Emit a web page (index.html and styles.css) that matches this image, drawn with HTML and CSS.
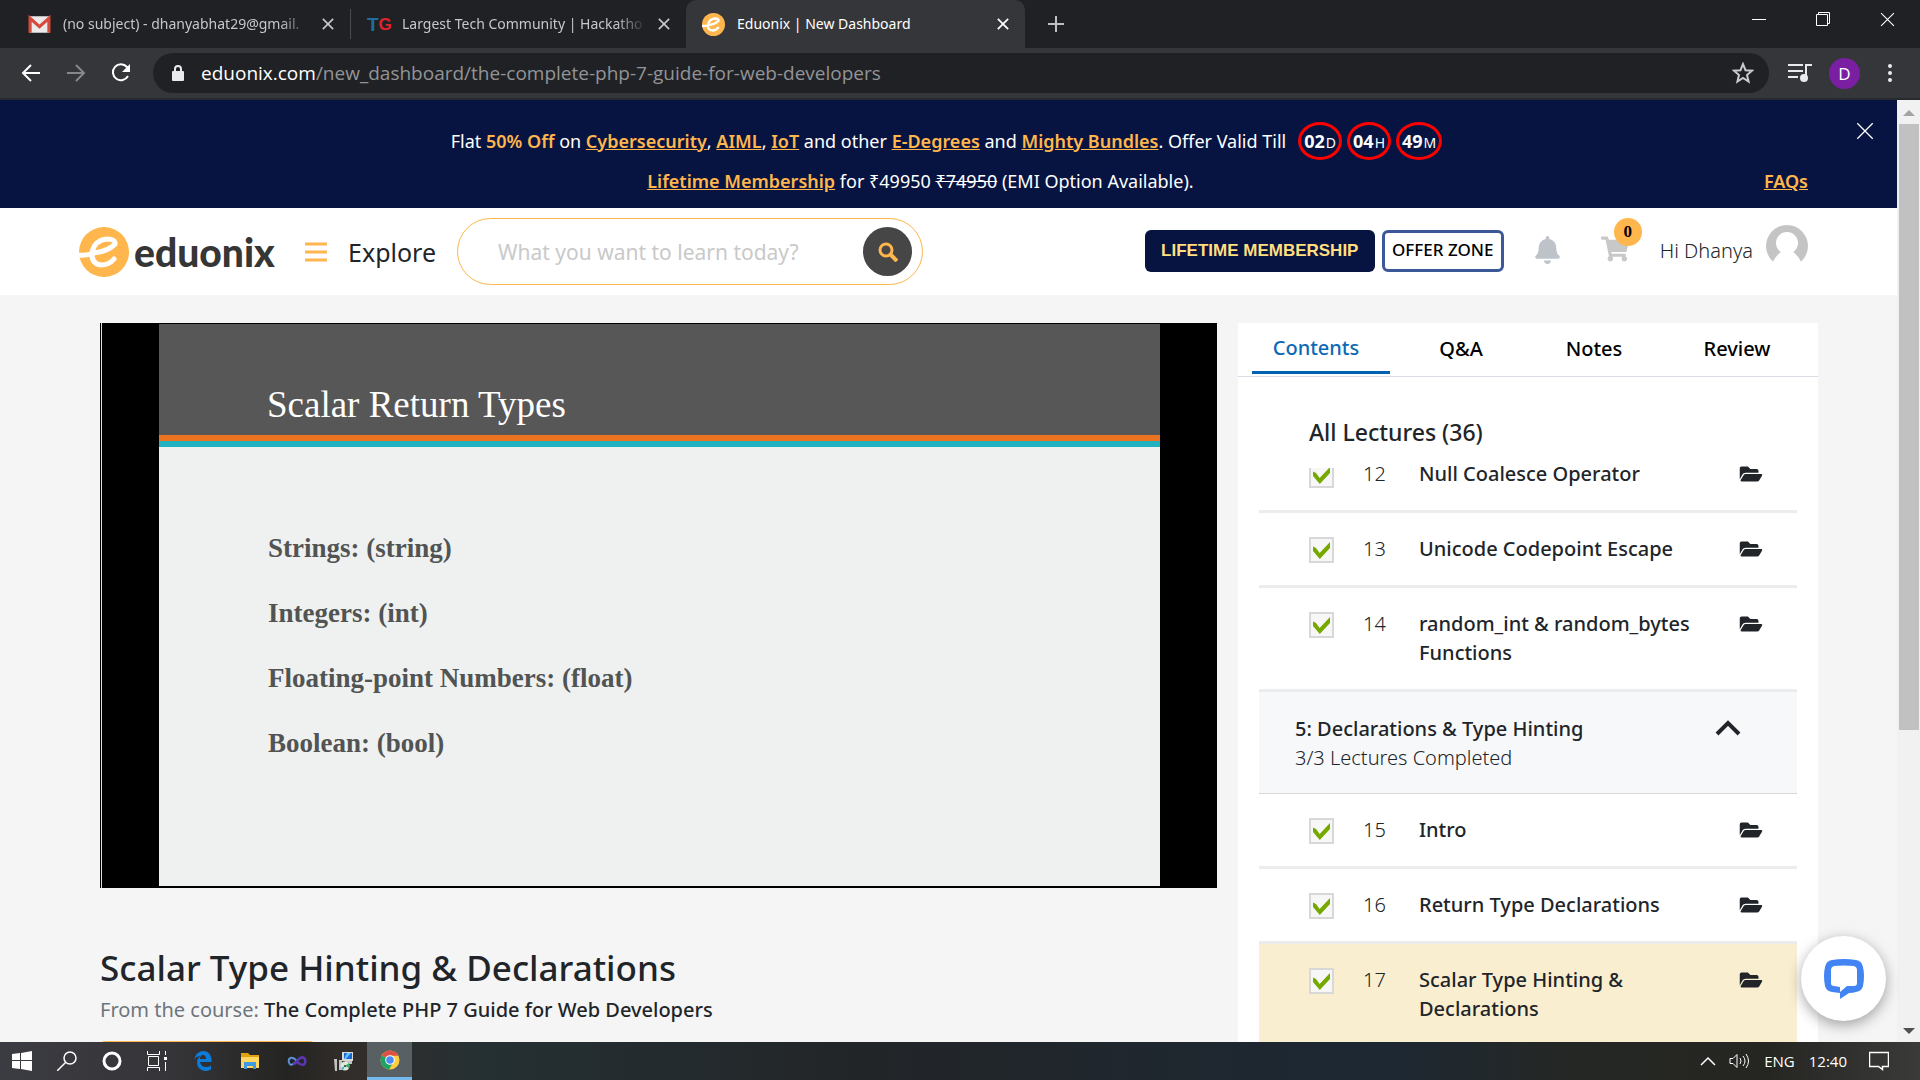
FILE: index.html
```html
<!DOCTYPE html>
<html lang="en">
<head>
<meta charset="utf-8">
<title>Eduonix | New Dashboard</title>
<link rel="stylesheet" href="styles.css">
</head>
<body>
<svg class="defs" aria-hidden="true">
  <symbol id="folder" viewBox="0 0 576 512"><path d="M572.694 292.093L500.27 416.248A63.997 63.997 0 0 1 444.989 448H45.025c-18.523 0-30.064-20.093-20.731-36.093l72.424-124.155A64 64 0 0 1 152 256h399.964c18.523 0 30.064 20.093 20.73 36.093zM152 224h328v-48c0-26.51-21.49-48-48-48H272l-64-64H48C21.49 64 0 85.49 0 112v278.046l69.077-118.418C86.214 242.25 117.989 224 152 224z"/></symbol>
  <symbol id="close" viewBox="0 0 14 14"><path d="M1 1l12 12M13 1L1 13" fill="none" stroke="currentColor"/></symbol>
  <symbol id="emark" viewBox="0 0 50 50"><circle cx="25" cy="25" r="25" fill="#ffb64d"/><path class="emark-line" d="M0 28 Q8 29 15 26 Q30 24 36 17 Q37 12 28 12 Q16 13 13 25 Q12 37 22 38 Q30 38 35 32" fill="none" stroke-width="5" stroke-linecap="round" stroke-linejoin="round"/></symbol>
</svg>

<header class="tabstrip">
  <div class="tab">
    <svg class="tab-icon" viewBox="0 0 22 22"><rect x="1" y="3" width="20" height="16" rx="1" fill="#eceaea"/><path d="M2 19V5l9 8 9-8v14" fill="none" stroke="#d54b3d" stroke-width="3"/></svg>
    <span class="tab-title">(no subject) - dhanyabhat29@gmail.</span>
    <button class="tab-close" aria-label="Close tab"><svg width="12" height="12"><use href="#close"/></svg></button>
  </div>
  <div class="tab tab-second">
    <span class="tab-icon tg"><b>T</b><b>G</b></span>
    <span class="tab-title">Largest Tech Community | Hackatho</span>
    <button class="tab-close" aria-label="Close tab"><svg width="12" height="12"><use href="#close"/></svg></button>
  </div>
  <div class="tab tab-active">
    <svg class="tab-icon"><use href="#emark"/></svg>
    <span class="tab-title">Eduonix | New Dashboard</span>
    <button class="tab-close" aria-label="Close tab"><svg width="12" height="12"><use href="#close"/></svg></button>
  </div>
  <button class="new-tab" aria-label="New tab"><svg width="18" height="18" viewBox="0 0 18 18"><path d="M9 1v16M1 9h16" stroke="#bdc1c6" stroke-width="2"/></svg></button>
  <div class="window-controls">
    <button aria-label="Minimize"><svg width="14" height="14"><path d="M0 7.500h14" stroke="#fff"/></svg></button>
    <button aria-label="Restore"><svg width="14" height="14"><path d="M.5 2.500h11v11H.5zM2.500 2.500v-2h11v11h-2" fill="none" stroke="#fff"/></svg></button>
    <button aria-label="Close"><svg width="15" height="15"><use href="#close"/></svg></button>
  </div>
</header>

<div class="toolbar">
  <div class="nav-buttons">
    <button aria-label="Back"><svg width="20" height="20" viewBox="0 0 20 20"><path d="M19 10H2M10 2l-8 8 8 8" fill="none" stroke="#fff" stroke-width="2"/></svg></button>
    <button aria-label="Forward"><svg width="20" height="20" viewBox="0 0 20 20"><path d="M1 10h17M10 2l8 8-8 8" fill="none" stroke="#85878a" stroke-width="2"/></svg></button>
    <button aria-label="Reload"><svg width="20" height="20" viewBox="0 0 20 20"><path d="M17 13a8 8 0 1 1-1-9l2 2" fill="none" stroke="#fff" stroke-width="2"/><path d="M19 1v8h-8z" fill="#fff"/></svg></button>
  </div>
  <div class="omnibox">
    <svg width="12" height="17" viewBox="0 0 12 17"><rect y="6" width="12" height="10" rx="1" fill="#e8eaed"/><path d="M3 7V4a3 3 0 0 1 6 0v3" fill="none" stroke="#e8eaed" stroke-width="2"/></svg>
    <p class="url"><b>eduonix.com</b>/new_dashboard/the-complete-php-7-guide-for-web-developers</p>
    <svg width="22" height="22" viewBox="0 0 22 22"><path d="M11 2l2.500 6.200 6.500.5-5 4.300 1.600 6.500L11 16l-5.600 3.500L7 13 2 8.700l6.500-.5z" fill="none" stroke="#c8cacd" stroke-width="2"/></svg>
  </div>
  <svg class="music" width="24" height="20" viewBox="0 0 24 20"><path d="M0 2h15M0 8h15M0 14h10M18 16V2h6" fill="none" stroke="#e8eaed" stroke-width="2"/><circle cx="16" cy="15" r="4" fill="#e8eaed"/></svg>
  <span class="profile">D</span>
  <svg class="dots" width="6" height="20"><g fill="#e8eaed"><circle cx="3" cy="3" r="2"/><circle cx="3" cy="10" r="2"/><circle cx="3" cy="17" r="2"/></g></svg>
</div>

<div class="viewport">
  <div class="page">
    <section class="promo">
      <div class="promo-line">
        <p>Flat <em>50% Off</em> on <a href="#">Cybersecurity</a>, <a href="#">AIML</a>, <a href="#">IoT</a> and other <a href="#">E-Degrees</a> and <a href="#">Mighty Bundles</a>. Offer Valid Till</p>
        <div class="countdown"><span><b>02</b>D</span><span><b>04</b>H</span><span><b>49</b>M</span></div>
      </div>
      <div class="promo-line">
        <p class="promo-text"><a href="#">Lifetime Membership</a> for ₹49950 <s>₹74950</s> (EMI Option Available).</p>
        <a href="#">FAQs</a>
      </div>
      <button class="promo-close" aria-label="Dismiss offer"><svg width="18" height="18"><use href="#close"/></svg></button>
    </section>

    <div class="site-header">
      <a class="logo" href="#"><svg width="50" height="50"><use href="#emark"/></svg><span>eduonix</span></a>
      <button class="explore"><svg width="22" height="20"><path d="M0 2h22M0 10h22M0 18h22" stroke="#ffb64d" stroke-width="3"/></svg>Explore</button>
      <form class="search">
        <input type="text" aria-label="Search courses" placeholder="What you want to learn today?">
        <button type="button" aria-label="Search"><svg width="20" height="20" viewBox="0 0 20 20"><circle cx="8" cy="8" r="6" fill="none" stroke="#ffb64d" stroke-width="3"/><path d="M12 12l7 7" stroke="#ffb64d" stroke-width="4"/></svg></button>
      </form>
      <a class="lifetime" href="#">LIFETIME MEMBERSHIP</a>
      <a class="offer" href="#">OFFER ZONE</a>
      <button class="bell" aria-label="Notifications"><svg width="25" height="28" viewBox="0 0 448 512"><path fill="#bdc3c9" d="M224 512c35.320 0 63.970-28.650 63.970-64H160.030c0 35.350 28.650 64 63.970 64zm215.390-149.710c-19.320-20.760-55.470-51.990-55.470-154.290 0-77.700-54.480-139.900-127.940-155.160V32c0-17.670-14.320-32-31.980-32s-31.980 14.330-31.980 32v20.840C118.560 68.100 64.080 130.300 64.080 208c0 102.300-36.150 133.530-55.470 154.290-6 6.450-8.660 14.160-8.610 21.710.11 16.400 12.980 32 32.100 32h383.800c19.120 0 32-15.600 32.100-32 .05-7.550-2.610-15.270-8.610-21.710z"/></svg></button>
      <a class="cart" href="#" aria-label="Cart"><svg width="28" height="26" viewBox="0 0 576 512"><path fill="#c8c8c8" d="M528.120 301.319l47.273-208C578.806 78.301 567.391 64 551.990 64H159.208l-9.166-44.810C147.758 8.021 137.930 0 126.529 0H24C10.745 0 0 10.745 0 24v16c0 13.255 10.745 24 24 24h69.883l70.248 343.435C147.325 417.100 136 435.222 136 456c0 30.928 25.072 56 56 56s56-25.072 56-56c0-15.674-6.447-29.835-16.824-40h209.647C430.447 426.165 424 440.326 424 456c0 30.928 25.072 56 56 56s56-25.072 56-56c0-22.172-12.888-41.332-31.579-50.405l5.517-24.276c3.413-15.018-8.002-29.319-23.403-29.319H218.117l-6.545-32h293.145c11.206 0 20.920-7.754 23.403-18.681z"/></svg><span class="badge">0</span></a>
      <a class="account" href="#"><span>Hi Dhanya</span><svg width="42" height="42" viewBox="0 0 42 42"><circle cx="21" cy="21" r="21" fill="#c4c4c4"/><circle cx="21" cy="18" r="11" fill="#fff"/><path d="M5 42Q8 32 15 27h12Q34 32 37 42z" fill="#fff"/></svg></a>
    </div>

    <main class="content">
      <section class="lesson">
        <div class="video">
          <div class="slide">
            <h2>Scalar Return Types</h2>
            <div class="stripe"></div>
            <ul>
              <li>Strings: (string)</li>
              <li>Integers: (int)</li>
              <li>Floating-point Numbers: (float)</li>
              <li>Boolean: (bool)</li>
            </ul>
          </div>
        </div>
        <h1>Scalar Type Hinting &amp; Declarations</h1>
        <p class="course">From the course: <b>The Complete PHP 7 Guide for Web Developers</b></p>
        <button class="next" aria-label="Next lecture"></button>
      </section>

      <aside class="panel">
        <nav class="panel-tabs">
          <button class="selected">Contents</button><button>Q&amp;A</button><button>Notes</button><button>Review</button>
        </nav>
        <h3>All Lectures (36)</h3>
        <div class="lectures">
          <div class="row row-first"><input type="checkbox" id="l12" checked><span class="num">12</span><label for="l12">Null Coalesce Operator</label><svg class="folder"><use href="#folder"/></svg></div>
          <div class="row"><input type="checkbox" id="l13" checked><span class="num">13</span><label for="l13">Unicode Codepoint Escape</label><svg class="folder"><use href="#folder"/></svg></div>
          <div class="row"><input type="checkbox" id="l14" checked><span class="num">14</span><label for="l14">random_int &amp; random_bytes Functions</label><svg class="folder"><use href="#folder"/></svg></div>
          <button class="section-head">
            <span class="section-text"><b>5: Declarations &amp; Type Hinting</b><span>3/3 Lectures Completed</span></span>
            <svg width="26" height="16" viewBox="0 0 26 16"><path d="M2 14L13 3l11 11" fill="none" stroke="#212529" stroke-width="4"/></svg>
          </button>
          <div class="row"><input type="checkbox" id="l15" checked><span class="num">15</span><label for="l15">Intro</label><svg class="folder"><use href="#folder"/></svg></div>
          <div class="row"><input type="checkbox" id="l16" checked><span class="num">16</span><label for="l16">Return Type Declarations</label><svg class="folder"><use href="#folder"/></svg></div>
          <div class="row row-current"><input type="checkbox" id="l17" checked><span class="num">17</span><label for="l17">Scalar Type Hinting &amp; Declarations</label><svg class="folder"><use href="#folder"/></svg></div>
        </div>
      </aside>
    </main>
  </div>
  <div class="scrollbar"><i class="arrow-up"></i><i class="thumb"></i><i class="arrow-down"></i></div>
  <button class="chat" aria-label="Open chat"><svg width="40" height="40" viewBox="0 0 40 40"><path fill="#4384f5" fill-rule="evenodd" d="M8 1Q20-1 32 1 38 2 39 8 41 17 39 27 38 32 32 33 29 34 25 34L16 40V34L8 33Q2 32 1 27-1 17 1 8 2 2 8 1zM10 7Q7 8 7 11V24Q7 27 10 27L16 28V33L23 27H30Q33 27 33 24V11Q33 8 30 7 20 6 10 7z"/></svg></button>
</div>

<footer class="taskbar">
  <button class="cell start" aria-label="Start"><svg width="20" height="20"><path fill="#fff" d="M0 3l8-1v7H0zM9 2l11-2v9H9zM0 10h8v8l-8-1zM9 10h11v10L9 18z"/></svg></button>
  <button class="cell" aria-label="Search"><svg width="20" height="20"><circle cx="13" cy="7" r="6" fill="none" stroke="#fff" stroke-width="1.500"/><path d="M9 11l-9 9" stroke="#fff" stroke-width="1.500"/></svg></button>
  <button class="cell" aria-label="Cortana"><svg width="20" height="20"><circle cx="10" cy="10" r="8" fill="none" stroke="#fff" stroke-width="3"/></svg></button>
  <button class="cell" aria-label="Task view"><svg width="20" height="20"><path d="M.5 0v3.500h12V0M.5 20v-3.500h12V20M1.500 5.500h10v9h-10zM18.500 0v4M18.500 11v9" fill="none" stroke="#fff"/><path d="M17 6h3v3h-3z" fill="#fff"/></svg></button>
  <button class="cell app" aria-label="Edge"><svg width="18" height="20" viewBox="0 0 18 20"><path fill="#0c7bd9" d="M0 9Q2 0 10 0q8 1 7.500 11H6q1 5 6 5 3 0 5-1.500v4Q14 20 11 20 3 19 3 11q0-4 4-6-5 0-7 4zm6-1h6q0-4-3-4T6 8z"/></svg></button>
  <button class="cell app" aria-label="File Explorer"><svg width="18" height="18"><path d="M0 1h7l2 2h9v6H0z" fill="#e5a00d"/><path d="M0 5h18v11H0z" fill="#ffd761"/><path d="M3 17v-7h12v7h-3v-3H6v3z" fill="#3f9ae5"/></svg></button>
  <button class="cell app" aria-label="Visual Studio"><svg width="20" height="12" viewBox="0 0 20 12"><path d="M10 6Q6 2 3.500 3T2 7.500 6 9 10 6" fill="none" stroke="#5b8fd6" stroke-width="2"/><path d="M6 9Q8 9 11 5T17 3q2 2 1 5t-5 1-3-3" fill="none" stroke="#5b35b5" stroke-width="2.500"/></svg></button>
  <button class="cell app" aria-label="Installer"><svg width="19" height="20"><path d="M8 1h11v9H8z" fill="#d8d8d8"/><path d="M10 2h8v6h-8z" fill="#1767d8"/><path d="M13 2h4l-5 6h-2z" fill="#5fc1f4"/><path d="M0 8h3v12H1zM5 9h3v10H5zM11 10h7v3h-7z" fill="#c2c2c2"/><circle cx="11" cy="15" r="4.500" fill="#dce9dc"/><path d="M11 15l4-3v5z" fill="#3fae68"/><path d="M11 15l-4 2 2 2z" fill="#35b7cb"/><circle cx="11" cy="15" r="1" fill="#333"/></svg></button>
  <button class="cell cell-active" aria-label="Chrome"><svg width="20" height="20" viewBox="0 0 20 20"><circle cx="10" cy="10" r="9.500" fill="#ffce44"/><path d="M10 10L1.800 5.200A9.500 9.500 0 0 0 9 19.500l4.500-7.500z" fill="#1da362"/><path d="M10 10L1.800 5.200A9.500 9.500 0 0 1 18.500 5.700H10z" fill="#dd5144"/><circle cx="10" cy="10" r="4.800" fill="#fff"/><circle cx="10" cy="10" r="3.800" fill="#4c8bf5"/></svg></button>
  <div class="tray">
    <svg width="16" height="10"><path d="M1 9l7-7 7 7" fill="none" stroke="#fff" stroke-width="1.500"/></svg>
    <svg width="22" height="16"><path d="M1 5.500h3l4-4v13l-4-4H1z" fill="none" stroke="#fff"/><path d="M11 5q2 3 0 6M14 3q4 5 0 10M17 1q5 7 0 14" fill="none" stroke="#fff"/></svg>
    <span>ENG</span>
    <time>12:40</time>
    <svg class="notes" width="20" height="20"><path d="M.5 1.500h19v14h-6v3l-4-3h-9z" fill="none" stroke="#fff" stroke-width="1.500"/></svg>
  </div>
</footer>
</body>
</html>
```
FILE: styles.css
```css
* { box-sizing: border-box; }
html, body { height: 100%; }
body {
  margin: 0;
  display: flex;
  flex-direction: column;
  overflow: hidden;
  font: 18px/29px "Noto Sans", "Open Sans", sans-serif;
  color: #212529;
}
h1, h2, h3, p, ul { margin: 0; padding: 0; font-weight: 400; }
button { border: 0; padding: 0; margin: 0; background: none; font: inherit; color: inherit; }
svg { display: block; flex: none; }
a { color: inherit; text-decoration: none; }
.defs { display: none; }
.emark-line { stroke: #fff; }
.toolbar, .taskbar { font-family: "Open Sans", sans-serif; }

/* Browser tabs */
.tabstrip { flex: none; display: flex; align-items: stretch; height: 48px; background: #202124; color: #c4c7cb; font-size: 14px; line-height: 20px; }
.tab { display: flex; align-items: center; width: 339px; padding: 0 16px; gap: 12px; }
.tab:first-child { width: 351px; padding-left: 28px; border-right: 1px solid transparent; border-image: linear-gradient(transparent 10px, #4a4c50 10px, #4a4c50 38px, transparent 38px) 1; }
.tab-second { width: 335px; }
.tab-icon { width: 23px; height: 23px; }
.tab-title { flex: 1; overflow: hidden; white-space: nowrap; mask-image: linear-gradient(to right, #000 88%, transparent); }
.tab-active { background: #35363a; color: #fff; border-radius: 10px 10px 0 0; }
.tab-active .tab-title { mask-image: none; }
.tab-active .emark-line { stroke: #35363a; }
.tab-close svg { stroke-width: 2; }
.tg { display: flex; font: 21px/23px "Liberation Sans Narrow", "Liberation Sans", sans-serif; }
.tg b { width: 12px; color: #1d6e9e; font-size: 19px; }
.tg b + b { color: #e0232e; font-size: 17px; }
.new-tab { width: 62px; display: grid; place-items: center; }
.window-controls { display: flex; gap: 50px; margin-left: auto; padding: 12px 25px 0 0; align-items: flex-start; color: #fff; }

/* Address bar */
.toolbar { flex: none; display: flex; align-items: center; height: 52px; padding: 0 27px 0 21px; background: #35363a; border-bottom: 2px solid #28292c; }
.nav-buttons { display: flex; gap: 25px; margin-right: 22px; }
.omnibox { flex: 1; display: flex; align-items: center; gap: 17px; height: 40px; padding: 0 15px 0 19px; border-radius: 20px; background: #202124; }
.url { flex: 1; color: #929497; font-size: 19px; line-height: 26px; }
.url b { color: #fff; font-weight: 400; }
.music { margin-left: 19px; }
.profile { width: 31px; height: 31px; margin: 0 27px 0 17px; border-radius: 50%; background: #7b1fa2; color: #fff; text-align: center; font-size: 17px; line-height: 31px; }

.viewport { position: relative; flex: 1; min-height: 0; display: flex; overflow: hidden; background: #f5f5f5; }
.page { flex: 1; }
.scrollbar { width: 23px; padding: 0 1px 0 2px; display: flex; flex-direction: column; align-items: center; background: #f1f1f1; }
.arrow-up, .arrow-down { border: 6px solid transparent; }
.arrow-up { border-bottom-color: #a3a3a3; margin: 4px 0 8px; }
.arrow-down { border-top-color: #505050; margin: auto 0 2px; }
.thumb { width: 100%; height: 606px; background: #c1c1c1; }

/* Offer banner */
.promo { position: relative; height: 108px; padding: 21px 89px 0; background: #071442; color: #fff; line-height: 28px; }
.promo-line { display: flex; justify-content: center; align-items: center; gap: 12px; min-height: 40px; }
.promo a, .promo em { color: #ffb64d; font-weight: 600; font-style: normal; }
.promo a { text-decoration: underline; }
.promo-text { flex: 1; text-align: center; }
.countdown { display: flex; gap: 5px; margin-right: 4px; }
.countdown span { padding: 0 3px; border: 3px solid #f00; border-radius: 50%; height: 38px; line-height: 32px; font-size: 14px; }
.countdown b { font-size: 18px; margin-right: 1px; }
.promo-close { position: absolute; top: 22px; right: 23px; }

/* Site header */
.site-header { display: flex; align-items: center; height: 87px; padding: 0 89px 0 79px; background: #fff; }
.logo { display: flex; align-items: center; gap: 5px; width: 226px; color: #363636; font: 900 39px/44px Lato, sans-serif; }
.explore { display: flex; align-items: center; gap: 21px; width: 152px; font-size: 25px; line-height: 32px; }
.search { display: flex; align-items: center; width: 466px; height: 67px; padding: 0 10px 0 40px; border: 1px solid #ffb64d; border-radius: 34px; }
.search input { flex: 1; min-width: 0; border: 0; outline: 0; padding: 0; background: none; font: 21px/30px "Noto Sans", sans-serif; }
.search input::placeholder { color: #c9c9c9; }
.search button { display: grid; place-items: center; width: 49px; height: 49px; border-radius: 50%; background: #464646; }
.lifetime { margin: 0 7px 2px auto; width: 230px; height: 42px; border-radius: 6px; background: #071442; color: #ffdf80; text-align: center; font: bold 17px/42px "Liberation Sans", sans-serif; }
.offer { margin-bottom: 2px; width: 122px; height: 42px; border: 3px solid #3b5998; border-radius: 6px; color: #000; text-align: center; font-size: 17px; line-height: 34px; font-weight: 500; white-space: nowrap; }
.bell { margin: 0 41px 4px 31px; }
.cart { position: relative; margin-bottom: 6px; }
.badge { position: absolute; left: 13px; top: -18px; width: 28px; height: 28px; border-radius: 50%; background: #ffb64d; color: #000; text-align: center; font: bold 17px/28px "Liberation Serif", serif; }
.account { display: flex; align-items: center; gap: 13px; margin: 0 0 12px 31px; font-size: 20px; font-weight: 300; }
.account span { padding-top: 9px; }

/* Lesson */
.content { display: grid; grid-template-columns: 1117fr 580fr; gap: 21px; padding: 28px 79px 0 100px; }
.video { aspect-ratio: 1117 / 565; padding: 1px 57px 2px 59px; background: #000; box-shadow: inset 1px 0 #000, inset 2px 0 #ddd; }
.slide { height: 100%; background: #eff1f0; }
.slide h2 { height: 111px; padding: 59px 0 0 108px; background: #575757; color: #fff; font: 37px/44px "Liberation Serif", serif; }
.stripe { height: 12px; background: linear-gradient(#ec7420 50%, #22b1bf 50%); }
.slide ul { padding: 69px 0 0 109px; list-style: none; color: #525454; font: bold 27px/65px "Liberation Serif", serif; }
.lesson h1 { margin-top: 56px; font-size: 35px; line-height: 48px; font-weight: 500; }
.course { margin-top: 4px; color: #6c757d; font-size: 20px; line-height: 28px; }
.course b { color: #212529; font-weight: 500; }
.next { display: block; width: 215px; height: 48px; margin-top: 17px; border-radius: 5px; background: #ffb64d; }

/* Lecture list */
.panel { background: #fff; }
.panel-tabs { display: grid; grid-template-columns: 138fr 142fr 124fr 162fr; padding-left: 14px; height: 54px; border-bottom: 1px solid #dcdce6; color: #000; font-size: 20px; font-weight: 500; }
.panel-tabs button { padding-bottom: 2px; }
.panel-tabs .selected { height: 51px; padding: 0 10px 0 0; border-bottom: 3px solid #0162b4; color: #0e69b5; }
.panel h3 { padding: 40px 0 20px 71px; font-size: 23px; line-height: 31px; font-weight: 500; }
.lectures { margin: 0 21px; font-size: 20px; }
.row { display: grid; grid-template-columns: 25px 26px 1fr 24px; column-gap: 29px; align-items: start; padding: 21px 34px 22px 50px; border-bottom: 3px solid #ececec; }
.row-first { margin-top: -30px; }
.row-first input { clip-path: inset(6px 0 0); }
.row input { appearance: none; margin: 3px 0 0; width: 25px; height: 26px; border: 2px solid #d8d8d8; background: #f7f7f7; }
.row input::before { content: ""; display: block; width: 17px; height: 17px; margin: 3px 2px; background: #75a900; clip-path: polygon(0 26%, 18% 36%, 39% 64%, 100% 0, 100% 35%, 40% 100%, 0 53%); }
.num { font-weight: 300; }
.row label { padding-left: 1px; font-weight: 500; }
.folder { width: 24px; height: 20px; margin-top: 5px; fill: #212529; }
.row-current { background: #f9eed0; padding-bottom: 30px; }
.section-head { display: flex; justify-content: space-between; align-items: flex-start; width: 100%; padding: 22px 56px 21px 36px; background: #f7f8fa; border-bottom: 1px solid #d6d8da; text-align: left; font-weight: 300; }
.section-text { display: flex; flex-direction: column; }
.section-head b { font-weight: 500; }
.section-head svg { margin-top: 6px; }

.chat { position: absolute; right: 34px; bottom: 21px; width: 85px; height: 85px; display: grid; place-items: center; border-radius: 50%; background: #fff; box-shadow: 0 4px 14px rgba(0, 0, 0, .35); }

/* Taskbar */
.taskbar { flex: none; display: flex; height: 38px; color: #fff; background: linear-gradient(90deg, #3b3c42 0, #353438 9%, #242422 15%, #322d2a 18%, #253033 25%, #222528 45%, #1d2833 72%, #252724 82%, #252622 92%, #3a3b39 100%); }
.cell { display: grid; place-items: center; width: 45px; }
.start { width: 44px; }
.app { width: 47px; }
.cell-active { background: #586064; border-bottom: 3px solid #76b9ed; }
.tray { display: flex; align-items: center; margin-left: auto; padding-right: 26px; gap: 13px; font-size: 15px; border-right: 5px solid #3a3b39; }
.tray time { margin: 0 9px 0 1px; }
```
